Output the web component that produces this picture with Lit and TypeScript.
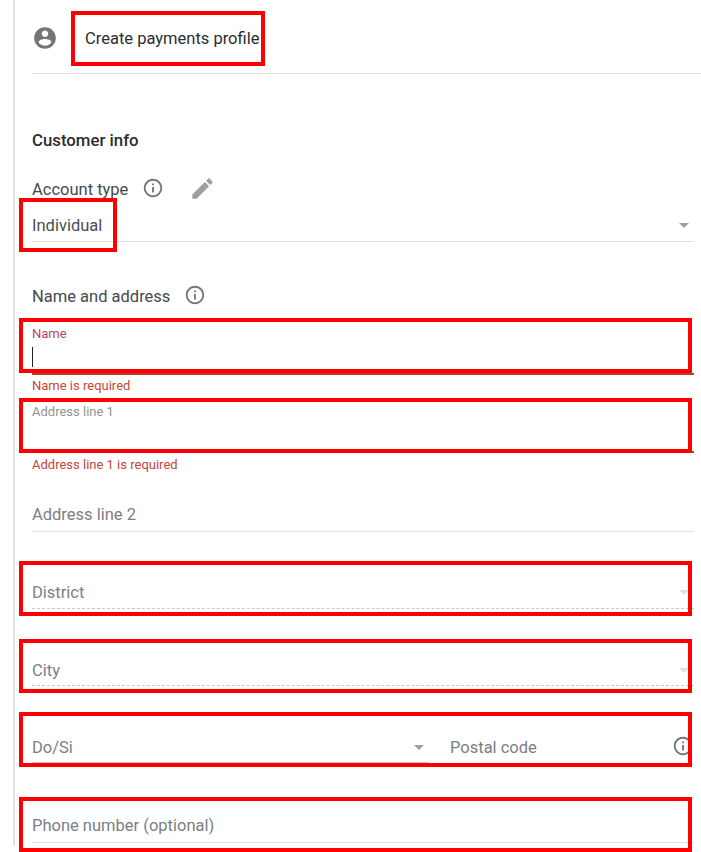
import { LitElement, html, css, svg } from "lit";
import { customElement } from "lit/decorators.js";

const INFO = svg`<path d="M11 7h2v2h-2zm0 4h2v6h-2zm1-9C6.48 2 2 6.48 2 12s4.48 10 10 10 10-4.48 10-10S17.52 2 12 2zm0 18c-4.41 0-8-3.59-8-8s3.59-8 8-8 8 3.59 8 8-3.59 8-8 8z"/>`;
const PERSON = svg`<path d="M12 2C6.48 2 2 6.48 2 12s4.48 10 10 10 10-4.48 10-10S17.52 2 12 2zm0 3c1.66 0 3 1.34 3 3s-1.34 3-3 3-3-1.34-3-3 1.34-3 3-3zm0 14.2c-2.5 0-4.71-1.28-6-3.22.03-1.99 4-3.08 6-3.08 1.99 0 5.97 1.09 6 3.08-1.29 1.94-3.5 3.22-6 3.22z"/>`;
const PENCIL = svg`<path d="M3 17.25V21h3.75L17.81 9.94l-3.75-3.75L3 17.25zM20.71 7.04c.39-.39.39-1.02 0-1.41l-2.34-2.34c-.39-.39-1.02-.39-1.41 0l-1.83 1.83 3.75 3.75 1.83-1.83z"/>`;

const MARKS = [
  [71, 11, 194, 55],
  [19, 198, 98, 54],
  [19, 318, 673, 55],
  [19, 398, 673, 55],
  [19, 561, 673, 55],
  [19, 639, 673, 54],
  [19, 712, 673, 55],
  [19, 797, 673, 55],
];

@customElement("app-root")
export class AppRoot extends LitElement {
  static styles = css`
    :host {
      display: block;
      position: relative;
      width: 701px;
      height: 852px;
      overflow: hidden;
      background: #fff;
      font-family: Roboto, "Liberation Sans", sans-serif;
      font-size: 16.5px;
      color: #7a7f85;
    }
    .panel {
      box-sizing: border-box;
      margin-left: 13px;
      width: 688px;
      height: 846px;
      border-left: 2px solid #e0e0e0;
      padding-left: 17px;
      display: flex;
      flex-direction: column;
    }
    .head {
      display: flex;
      align-items: center;
      height: 74px;
      padding-top: 3px;
      box-sizing: border-box;
      border-bottom: 1px solid #e0e0e0;
    }
    .head .avatar { width: 26px; height: 26px; fill: #757575; flex: none; }
    .head .title { margin-left: 27px; color: #2a2d30; }
    .body { width: 662px; display: flex; flex-direction: column; }
    .section { margin-top: 56px; height: 20px; line-height: 20px; font-size: 16.8px; font-weight: 500; color: #2a2d30; }
    .label-row { display: flex; align-items: center; height: 24px; color: #45494e; }
    .label-row .info { width: 22px; height: 22px; fill: #757575; flex: none; margin-bottom: 2px; }
    .account { margin-top: 27px; }
    .account .info { margin-left: 14px; }
    .account .pencil { width: 27px; height: 27px; fill: #9e9e9e; margin-left: 25px; margin-bottom: 2px; flex: none; }
    .naming { margin-top: 42px; }
    .naming .info { margin-left: 14px; }
    .field {
      display: flex;
      align-items: center;
      justify-content: space-between;
      box-sizing: border-box;
      border-bottom: 1px solid #e0e0e0;
      color: #7a7f85;
    }
    .value { color: #4a4f55; }
    .arrow { width: 0; height: 0; border-left: 5.5px solid transparent; border-right: 5.5px solid transparent; border-top: 5.5px solid #9e9e9e; margin-right: 5px; flex: none; }
    .arrow.off { border-top-color: #e0e0e0; }
    .type { height: 41px; padding-top: 8px; }
    .stacked { display: block; border-bottom: 2px solid #c0392b; height: 49px; margin-top: 18px; padding-top: 1px; }
    .small { font-size: 13px; line-height: 14px; color: #b5475f; }
    .small.muted { color: #8f9594; }
    .caret { width: 1px; height: 20px; background: #212121; margin-top: 6px; }
    .error { font-size: 13px; line-height: 14px; color: #c5453b; margin-top: 4px; }
    .address { height: 48px; margin-top: 12px; padding-top: 0; }
    .address-error { margin-top: 5px; }
    .plain { height: 34px; margin-top: 26px; }
    .dashed { border-bottom: 1px dashed #c8c8c8; height: 34px; margin-top: 43px; padding-top: 2px; }
    .dashed.city { padding-top: 4px; }
    .split { display: flex; margin-top: 44px; }
    .split .left { width: 397px; height: 33px; padding-top: 2px; border-bottom: 1px solid #cccccc; flex: none; }
    .split .right { flex: 1; margin-left: 21px; height: 35px; display: flex; align-items: center; justify-content: space-between; }
    .split .right svg { width: 22px; height: 22px; fill: #757575; margin-bottom: 3px; }
    .phone { margin-top: 44px; }
    .mark { position: absolute; box-sizing: border-box; border: 4px solid #ff0000; pointer-events: none; }
  `;

  render() {
    return html`
      <div class="panel">
        <div class="head">
          <svg class="avatar" viewBox="0 0 24 24">${PERSON}</svg>
          <div class="title">Create payments profile</div>
        </div>
        <div class="body">
          <div class="section">Customer info</div>
          <div class="label-row account">
            <span>Account type</span>
            <svg class="info" viewBox="0 0 24 24">${INFO}</svg>
            <svg class="pencil" viewBox="0 0 24 24">${PENCIL}</svg>
          </div>
          <div class="field type"><span class="value">Individual</span><i class="arrow"></i></div>
          <div class="label-row naming">
            <span>Name and address</span>
            <svg class="info" viewBox="0 0 24 24">${INFO}</svg>
          </div>
          <div class="field stacked">
            <div class="small">Name</div>
            <div class="caret"></div>
          </div>
          <div class="error">Name is required</div>
          <div class="field stacked address">
            <div class="small muted">Address line 1</div>
          </div>
          <div class="error address-error">Address line 1 is required</div>
          <div class="field plain">Address line 2</div>
          <div class="field dashed">District<i class="arrow off"></i></div>
          <div class="field dashed city">City<i class="arrow off"></i></div>
          <div class="split">
            <div class="field left">Do/Si<i class="arrow"></i></div>
            <div class="field right">Postal code<svg viewBox="0 0 24 24">${INFO}</svg></div>
          </div>
          <div class="field plain phone">Phone number (optional)</div>
        </div>
      </div>
      ${MARKS.map(
        ([x, y, w, h]) =>
          html`<div class="mark" style="left:${x}px;top:${y}px;width:${w}px;height:${h}px"></div>`
      )}
    `;
  }
}
